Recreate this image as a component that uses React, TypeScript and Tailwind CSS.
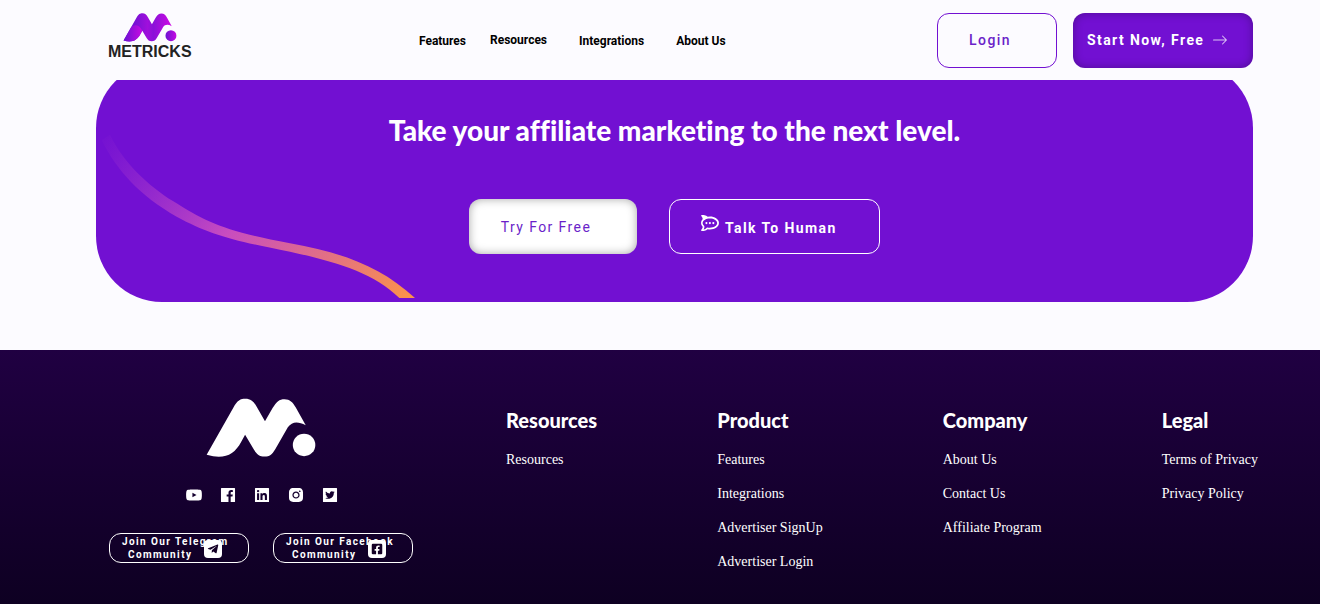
import { AiFillFacebook, AiFillInstagram, AiFillLinkedin, AiFillTwitterSquare, AiFillYoutube } from 'react-icons/ai'
import { FaFacebookSquare, FaRocketchat, FaTelegramPlane } from 'react-icons/fa'
import { BsArrowRight } from 'react-icons/bs'

const socials = [
  { label: 'YouTube', Icon: AiFillYoutube },
  { label: 'Facebook', Icon: AiFillFacebook },
  { label: 'LinkedIn', Icon: AiFillLinkedin },
  { label: 'Instagram', Icon: AiFillInstagram },
  { label: 'Twitter', Icon: AiFillTwitterSquare },
]

const communities = [
  { name: 'Join Our Telegram', Icon: FaTelegramPlane },
  { name: 'Join Our Facebook', Icon: FaFacebookSquare },
]

const columns = [
  { title: 'Resources', links: ['Resources'] },
  { title: 'Product', links: ['Features', 'Integrations', 'Advertiser SignUp', 'Advertiser Login'] },
  { title: 'Company', links: ['About Us', 'Contact Us', 'Affiliate Program'] },
  { title: 'Legal', links: ['Terms of Privacy', 'Privacy Policy'] },
]

const MARK =
  'M80 207 L160 66 C173 42 182 38 197 38 C213 38 222 46 231 62 L256 106 L279 66 C291 46 299 39 315 39 C331 39 340 48 349 64 L379 118 C356 106 338 106 325 124 L287 190 C277 206 270 212 255 212 C239 212 231 205 222 190 L196 146 L184 168 C163 207 133 222 80 207 Z'

function Logo() {
  return (
    <a href="#" className="flex flex-col items-center">
      <svg viewBox="78 36 332 180" className="h-[29px] w-[54px]" aria-hidden="true">
        <defs>
          <linearGradient id="mark" x1="0" y1="0" x2="1" y2="0">
            <stop offset="0.15" stopColor="#6a12d2" />
            <stop offset="0.5" stopColor="#a00fdc" />
            <stop offset="0.62" stopColor="#8a12d8" />
            <stop offset="1" stopColor="#d008e4" />
          </linearGradient>
          <linearGradient id="leg" x1="0" y1="0" x2="1" y2="0">
            <stop offset="0" stopColor="#6a12d2" />
            <stop offset="1" stopColor="#c80ae2" />
          </linearGradient>
        </defs>
        <path d={MARK} fill="url(#mark)" />
        <path d="M80 207 L126 126 C145 104 178 108 196 146 L184 168 C163 207 133 222 80 207 Z" fill="url(#leg)" />
        <circle cx="374" cy="177" r="34" fill="url(#leg)" />
      </svg>
      <span className="font-['Liberation_Sans',Arial,sans-serif] text-base leading-5 font-bold text-[#222]">METRICKS</span>
    </a>
  )
}

function Header() {
  return (
    <header className="sticky top-0 z-10 flex h-20 items-center justify-between bg-[#fcfbff] pr-[67px] pl-[108px]">
      <div className="pb-1.5">
        <Logo />
      </div>
      <nav className="flex pl-4 text-xs font-bold text-black">
        <a href="#" className="mr-6 pt-0.5">Features</a>
        <a href="#" className="mr-8 pt-px">Resources</a>
        <a href="#" className="mr-8 pt-0.5">Integrations</a>
        <a href="#" className="pt-0.5">About Us</a>
      </nav>
      <div className="flex gap-4 text-sm tracking-widest">
        <button className="h-[55px] w-[120px] rounded-xl border border-[#7210d2] pr-3.5 font-medium text-[#6b1fc9]">Login</button>
        <button className="flex h-[55px] w-[180px] items-center gap-2 rounded-xl bg-[#7210d2] pl-3.5 font-bold text-white shadow-[inset_0_0_10px_rgba(0,0,0,0.3)]">
          Start Now, Free
          <BsArrowRight className="size-4 opacity-75" />
        </button>
      </div>
    </header>
  )
}

function Banner() {
  return (
    <section className="relative -mt-[18px] mr-[67px] ml-24 flex h-60 flex-col items-center overflow-hidden rounded-[66px] bg-[#7210d2] pt-[50px]">
      <svg viewBox="18 164 960 504" className="absolute bottom-1 left-0 h-[168px] w-80" aria-hidden="true">
        <defs>
          <linearGradient id="wave" gradientUnits="userSpaceOnUse" x1="40" y1="150" x2="900" y2="780">
            <stop offset="0" stopColor="#a93bd0" stopOpacity="0" />
            <stop offset="0.46" stopColor="#c84cc0" />
            <stop offset="1" stopColor="#fd9546" />
          </linearGradient>
        </defs>
        <path
          d="M60 178 C100 262 175 331 250 378 C350 441 400 466 600 504 C760 533 870 572 975 668 L928 668 C850 592 740 560 600 529 C430 496 360 478 260 424 C150 362 80 285 35 195 Z"
          fill="url(#wave)"
        />
      </svg>
      <h2 className="font-['Lato',sans-serif] text-[28px] leading-9 font-black text-white [font-variant-ligatures:none]">
        Take your affiliate marketing to the next level.
      </h2>
      <div className="mt-[51px] flex gap-8 text-sm tracking-widest">
        <button className="h-[55px] w-[168px] rounded-xl bg-white pr-3.5 text-[#6b1fc9] shadow-[inset_0_0_10px_rgba(0,0,0,0.35)]">Try For Free</button>
        <button className="flex h-[55px] w-[211px] items-center rounded-xl border border-white pl-[31px] font-bold text-white">
          <FaRocketchat className="mr-1.5 mb-2 size-[18px]" />
          <span className="pt-0.5">Talk To Human</span>
        </button>
      </div>
    </section>
  )
}

function Footer() {
  return (
    <footer className="mt-12 flex min-h-[254px] bg-linear-to-b from-[#200042] to-[#0e0022] pr-[62px] pl-[109px] text-white">
      <div className="flex w-[304px] shrink-0 flex-col items-center pt-12">
        <svg viewBox="78 36 332 180" className="h-[60px] w-[110px]" fill="currentColor" aria-hidden="true">
          <path d={MARK} />
          <circle cx="374" cy="177" r="34" />
        </svg>
        <div className="mt-7 flex gap-4 pl-0.5">
          {socials.map(({ label, Icon }) => (
            <a key={label} href="#" aria-label={label}>
              <Icon className="size-[18px]" />
            </a>
          ))}
        </div>
        <div className="mt-[29px] flex gap-6">
          {communities.map(({ name, Icon }) => (
            <button
              key={name}
              className="relative h-[30px] w-[140px] rounded-xl border border-white pl-3 text-left text-[10px] leading-[13px] font-bold tracking-[1.4px]"
            >
              <span className="block whitespace-nowrap">{name}</span>
              <span className="block pl-1.5">Community</span>
              <span className="absolute top-1.5 left-[94px] flex size-[18px] items-center justify-center rounded bg-white text-[#140026]">
                <Icon className="size-3" />
              </span>
            </button>
          ))}
        </div>
      </div>
      <div className="ml-[93px] flex flex-1 justify-between pt-14">
        {columns.map((col) => (
          <div key={col.title}>
            <h3 className="font-['Lato',sans-serif] text-xl leading-7 font-black">{col.title}</h3>
            <ul className="mt-[9px] font-['Liberation_Serif','Times_New_Roman',serif] text-sm leading-[34px]">
              {col.links.map((link) => (
                <li key={link}>
                  <a href="#">{link}</a>
                </li>
              ))}
            </ul>
          </div>
        ))}
      </div>
    </footer>
  )
}

export default function App() {
  return (
    <div className="min-h-screen bg-[#fcfbff] font-['Roboto',sans-serif]">
      <Header />
      <main>
        <Banner />
      </main>
      <Footer />
    </div>
  )
}
